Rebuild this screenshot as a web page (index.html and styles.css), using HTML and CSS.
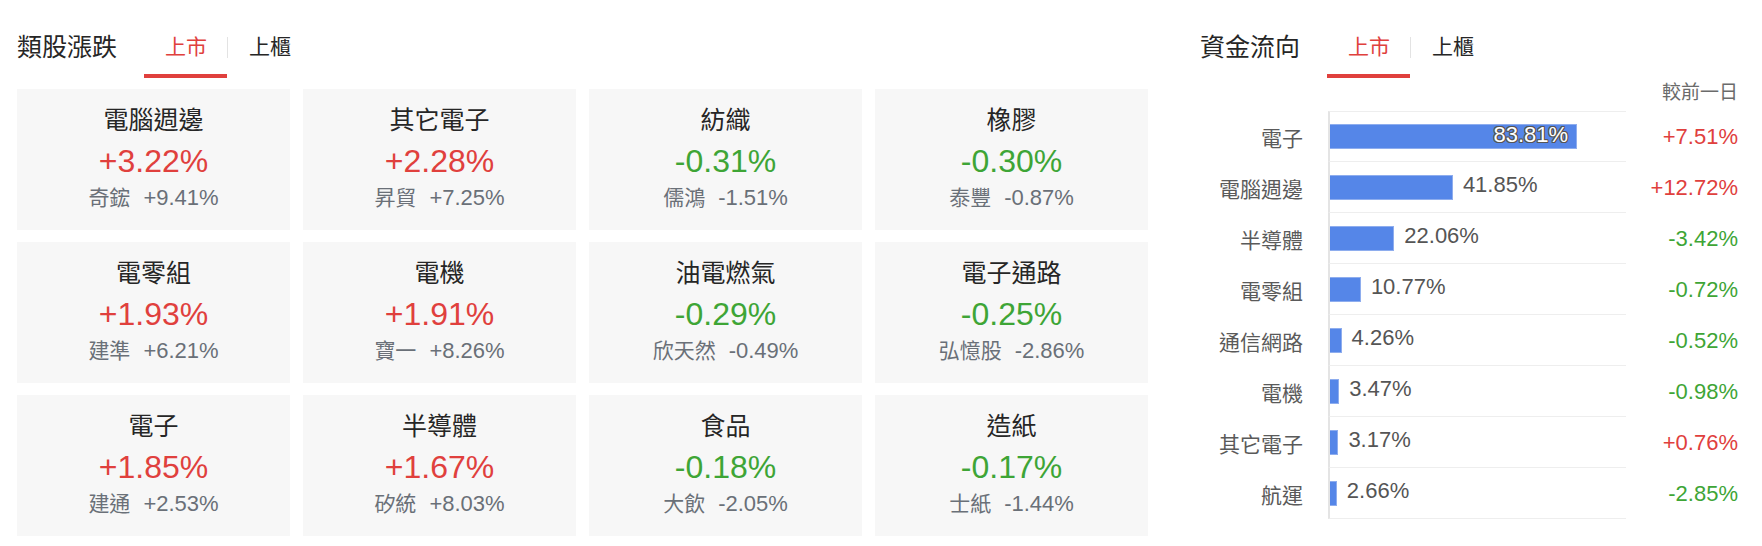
FILE: index.html
```html
<!DOCTYPE html>
<html lang="zh-Hant">
<head>
    <meta charset="UTF-8">
    <meta name="viewport" content="width=device-width, initial-scale=1.0">
    <title>類股漲跌 / 資金流向</title>
    <link rel="stylesheet" href="styles.css">
</head>
<body>
    <div class="page">

        <!-- 類股漲跌 -->
        <section class="sectors">
            <div class="head">
                <h2>類股漲跌</h2>
                <div class="tabs">
                    <span class="tab active">上市</span>
                    <span class="sep"></span>
                    <span class="tab">上櫃</span>
                </div>
            </div>

            <div class="grid">
                <div class="card">
                    <div class="name">電腦週邊</div>
                    <div class="pct up">+3.22%</div>
                    <div class="lead"><span>奇鋐</span><span class="num">+9.41%</span></div>
                </div>
                <div class="card">
                    <div class="name">其它電子</div>
                    <div class="pct up">+2.28%</div>
                    <div class="lead"><span>昇貿</span><span class="num">+7.25%</span></div>
                </div>
                <div class="card">
                    <div class="name">紡織</div>
                    <div class="pct down">-0.31%</div>
                    <div class="lead"><span>儒鴻</span><span class="num">-1.51%</span></div>
                </div>
                <div class="card">
                    <div class="name">橡膠</div>
                    <div class="pct down">-0.30%</div>
                    <div class="lead"><span>泰豐</span><span class="num">-0.87%</span></div>
                </div>

                <div class="card">
                    <div class="name">電零組</div>
                    <div class="pct up">+1.93%</div>
                    <div class="lead"><span>建準</span><span class="num">+6.21%</span></div>
                </div>
                <div class="card">
                    <div class="name">電機</div>
                    <div class="pct up">+1.91%</div>
                    <div class="lead"><span>寶一</span><span class="num">+8.26%</span></div>
                </div>
                <div class="card">
                    <div class="name">油電燃氣</div>
                    <div class="pct down">-0.29%</div>
                    <div class="lead"><span>欣天然</span><span class="num">-0.49%</span></div>
                </div>
                <div class="card">
                    <div class="name">電子通路</div>
                    <div class="pct down">-0.25%</div>
                    <div class="lead"><span>弘憶股</span><span class="num">-2.86%</span></div>
                </div>

                <div class="card">
                    <div class="name">電子</div>
                    <div class="pct up">+1.85%</div>
                    <div class="lead"><span>建通</span><span class="num">+2.53%</span></div>
                </div>
                <div class="card">
                    <div class="name">半導體</div>
                    <div class="pct up">+1.67%</div>
                    <div class="lead"><span>矽統</span><span class="num">+8.03%</span></div>
                </div>
                <div class="card">
                    <div class="name">食品</div>
                    <div class="pct down">-0.18%</div>
                    <div class="lead"><span>大飲</span><span class="num">-2.05%</span></div>
                </div>
                <div class="card">
                    <div class="name">造紙</div>
                    <div class="pct down">-0.17%</div>
                    <div class="lead"><span>士紙</span><span class="num">-1.44%</span></div>
                </div>
            </div>
        </section>

        <!-- 資金流向 -->
        <section class="flow">
            <div class="head">
                <h2>資金流向</h2>
                <div class="tabs">
                    <span class="tab active">上市</span>
                    <span class="sep"></span>
                    <span class="tab">上櫃</span>
                </div>
            </div>

            <div class="caption">較前一日</div>

            <div class="chart">
                <div class="row">
                    <span class="label">電子</span>
                    <div class="track"><div class="bar" style="--v: 83.81%"><span class="val inside">83.81%</span></div></div>
                    <span class="chg up">+7.51%</span>
                </div>
                <div class="row">
                    <span class="label">電腦週邊</span>
                    <div class="track"><div class="bar" style="--v: 41.85%"></div><span class="val">41.85%</span></div>
                    <span class="chg up">+12.72%</span>
                </div>
                <div class="row">
                    <span class="label">半導體</span>
                    <div class="track"><div class="bar" style="--v: 22.06%"></div><span class="val">22.06%</span></div>
                    <span class="chg down">-3.42%</span>
                </div>
                <div class="row">
                    <span class="label">電零組</span>
                    <div class="track"><div class="bar" style="--v: 10.77%"></div><span class="val">10.77%</span></div>
                    <span class="chg down">-0.72%</span>
                </div>
                <div class="row">
                    <span class="label">通信網路</span>
                    <div class="track"><div class="bar" style="--v: 4.26%"></div><span class="val">4.26%</span></div>
                    <span class="chg down">-0.52%</span>
                </div>
                <div class="row">
                    <span class="label">電機</span>
                    <div class="track"><div class="bar" style="--v: 3.47%"></div><span class="val">3.47%</span></div>
                    <span class="chg down">-0.98%</span>
                </div>
                <div class="row">
                    <span class="label">其它電子</span>
                    <div class="track"><div class="bar" style="--v: 3.17%"></div><span class="val">3.17%</span></div>
                    <span class="chg up">+0.76%</span>
                </div>
                <div class="row">
                    <span class="label">航運</span>
                    <div class="track"><div class="bar" style="--v: 2.66%"></div><span class="val">2.66%</span></div>
                    <span class="chg down">-2.85%</span>
                </div>
            </div>
        </section>

    </div>
</body>
</html>
```

FILE: styles.css
```css
body {
    margin: 0;
    background: #fff;
    color: #262626;
    font-family: "Liberation Sans", "Noto Sans CJK TC", sans-serif;
}
.page {
    display: flex;
    padding: 29px 0 0 17px;
}

/* header with title + 上市/上櫃 tabs */
.head {
    display: flex;
    align-items: flex-start;
}
.head h2 {
    margin: 0;
    font-size: 25px;
    font-weight: normal;
    line-height: 36px;
    color: #262626;
}
.tabs {
    display: flex;
    align-items: flex-start;
    margin-left: 27px;
}
.tab {
    font-size: 21px;
    line-height: 36px;
    padding: 0 20px 9px 21px;
    border-bottom: 4px solid transparent;
    color: #262626;
}
.tab.active {
    color: #e0403d;
    border-bottom-color: #e0403d;
}
.sep {
    width: 1px;
    height: 21px;
    margin-top: 8px;
    background: #e3e3e3;
}

/* sector cards */
.sectors {
    width: 1131px;
}
.grid {
    display: grid;
    grid-template-columns: repeat(4, 273px);
    grid-auto-rows: 141px;
    column-gap: 13px;
    row-gap: 12px;
    margin-top: 11px;
}
.card {
    background: #f7f7f7;
    text-align: center;
    padding-top: 16px;
    box-sizing: border-box;
}
.card .name {
    font-size: 25px;
    line-height: 30px;
    color: #262626;
}
.card .pct {
    font-size: 32px;
    line-height: 36px;
    margin-top: 8px;
}
.card .lead {
    display: flex;
    justify-content: center;
    align-items: baseline;
    gap: 13px;
    font-size: 21px;
    line-height: 24px;
    margin-top: 7px;
    color: #6a7078;
}
.card .lead .num {
    font-size: 22px;
}
.up { color: #e0403d; }
.down { color: #3ea536; }

/* money flow chart */
.flow {
    margin-left: 52px;
    width: 538px;
}
.caption {
    text-align: right;
    font-size: 19px;
    line-height: 24px;
    color: #6b6b6b;
    margin-top: 3px;
    margin-bottom: 6px;
}
.chart .row {
    display: grid;
    grid-template-columns: 128px 298px 1fr;
    height: 51px;
    align-items: center;
}
.chart .row:first-child .track {
    border-top: 1px solid #eee;
}
.label {
    box-sizing: border-box;
    padding-right: 25px;
    text-align: right;
    white-space: nowrap;
    font-size: 21px;
    color: #5a5a5a;
}
.track {
    display: flex;
    align-items: center;
    height: 100%;
    box-sizing: border-box;
    border-left: 2px solid #e4e4e4;
    border-bottom: 1px solid #eee;
}
.bar {
    width: calc(var(--v) - 1px);
    height: 25px;
    box-sizing: border-box;
    background: #5586e8;
    border: 1px solid #8eadee;
    border-left: none;
    display: flex;
    align-items: center;
    justify-content: flex-end;
}
.val {
    font-size: 22px;
    color: #555;
    margin-left: 10px;
    margin-bottom: 5px;
}
.val.inside {
    margin: 0 8px 4px 0;
    color: #fff;
    text-shadow: 1px 0 0 #555, -1px 0 0 #555, 0 1px 0 #555, 0 -1px 0 #555,
                 1px 1px 0 #555, -1px -1px 0 #555, 1px -1px 0 #555, -1px 1px 0 #555;
}
.chg {
    text-align: right;
    font-size: 22px;
}
```
